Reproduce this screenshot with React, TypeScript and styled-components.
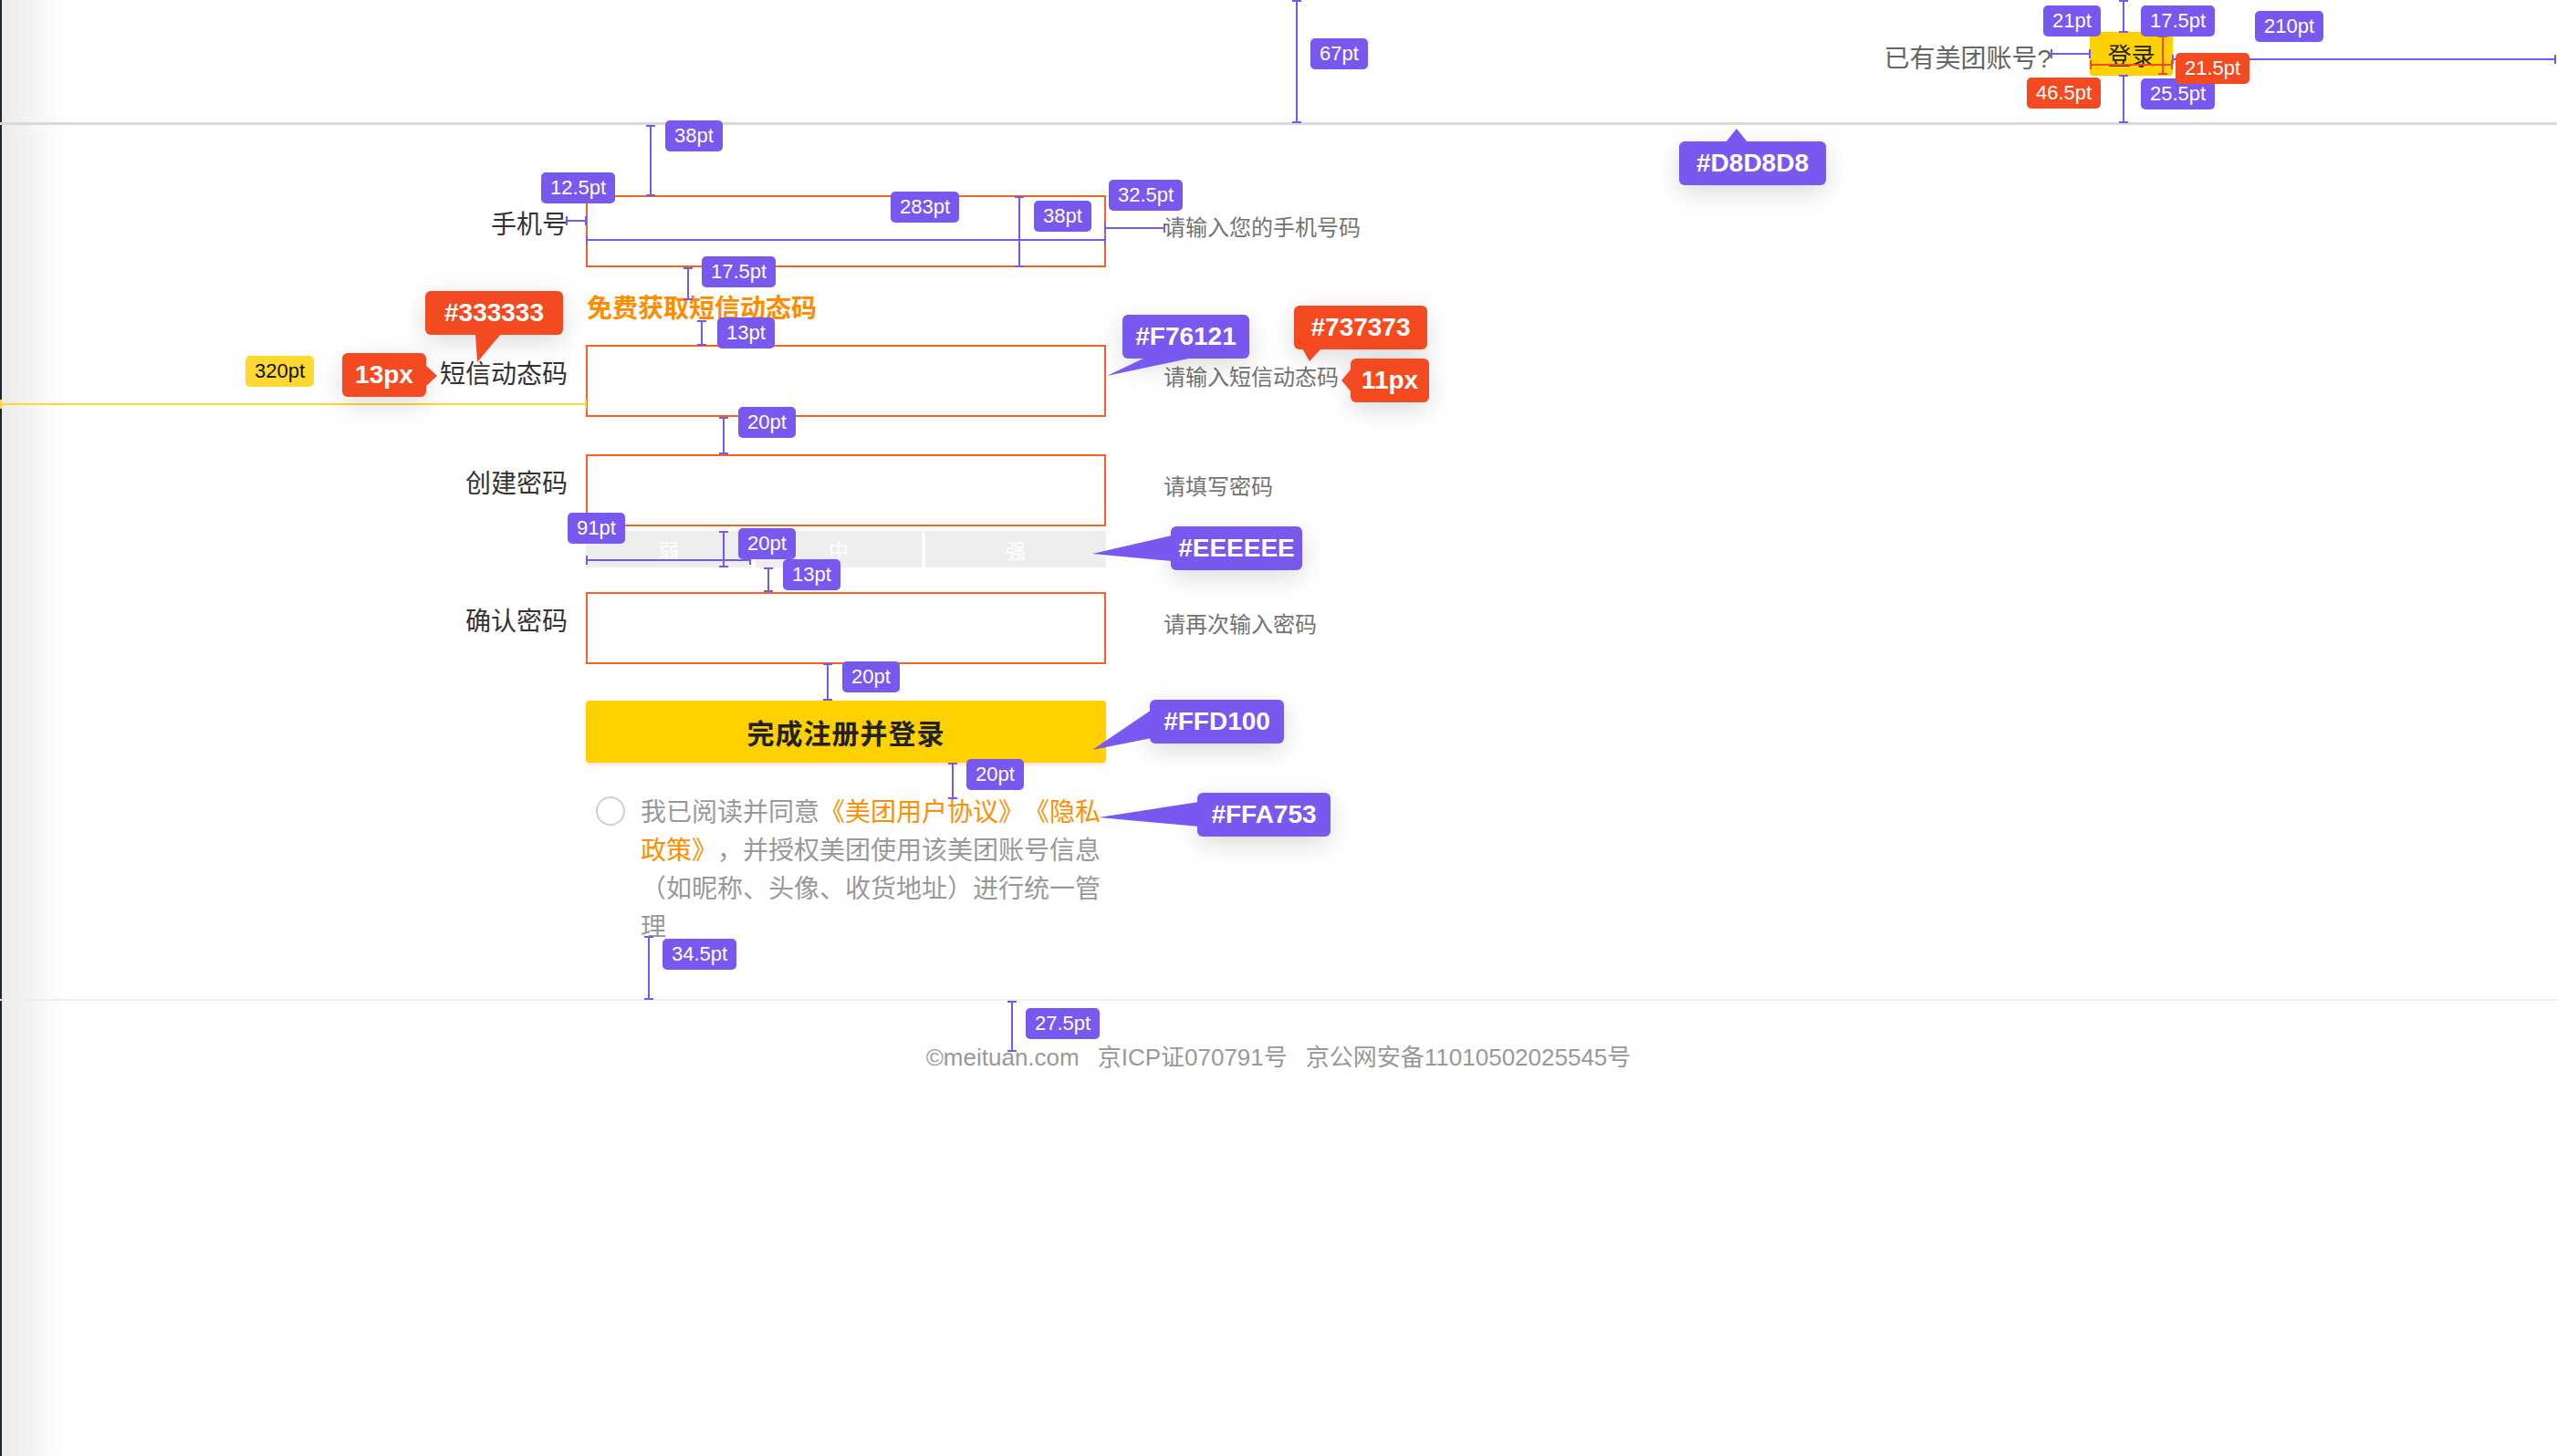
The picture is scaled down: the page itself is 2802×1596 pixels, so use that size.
import styled, { createGlobalStyle } from "styled-components";

const PURPLE = "#7858EE";
const RED = "#F34A22";
const YELLOW = "#FFD92F";

type Tone = "purple" | "red" | "yellow";
const toneBg = (t: Tone) => (t === "red" ? RED : t === "yellow" ? YELLOW : PURPLE);

const GlobalStyle = createGlobalStyle`
  * { box-sizing: border-box; }
  html, body { margin: 0; padding: 0; background: #fff; }
  body { font-family: "Liberation Sans", "Noto Sans CJK SC", sans-serif; }
`;

const Page = styled.div`
  position: relative;
  width: 2802px;
  height: 1596px;
  overflow: hidden;
  display: flex;
  flex-direction: column;
  background: linear-gradient(to right, #1c2630 0, #1c2630 2px, #ebebeb 2px, #fff 72px);
`;

const Header = styled.header`
  height: 137px;
  border-bottom: 3px solid #d8d8d8;
  display: flex;
  justify-content: flex-end;
  align-items: flex-start;
  padding: 35px 421px 0 0;
`;

const HaveAccount = styled.span`
  margin: 16px 42px 0 0;
  font-size: 28px;
  line-height: 28px;
  color: #666;
`;

const LoginButton = styled.button`
  width: 91px;
  height: 48px;
  border: none;
  border-radius: 4px;
  background: #ffd100;
  color: #222;
  font-family: inherit;
  font-size: 26px;
  display: flex;
  align-items: center;
  justify-content: center;
  padding: 0;
`;

const Form = styled.div`
  display: flex;
  flex-direction: column;
  margin-top: 77px;
`;

const Row = styled.div<{ $mt?: number }>`
  display: flex;
  align-items: center;
  height: 79px;
  margin-top: ${(p) => p.$mt ?? 0}px;
`;

const Label = styled.label`
  width: 622px;
  margin: 0 20px 14px 0;
  text-align: right;
  font-size: 28px;
  line-height: 28px;
  color: #333;
`;

const Field = styled.input`
  width: 570px;
  height: 79px;
  border: 2px solid #f76121;
  background: #fff;
  outline: none;
  margin: 0;
`;

const Hint = styled.span`
  margin: 0 0 8px 63px;
  font-size: 24px;
  line-height: 24px;
  color: #737373;
`;

const SmsLink = styled.a`
  margin: 32px 0 25px 643px;
  font-size: 28px;
  line-height: 28px;
  font-weight: 700;
  color: #ff8c00;
`;

const Strength = styled.div`
  margin: 5px 0 0 642px;
  width: 570px;
  height: 40px;
  display: grid;
  grid-template-columns: 182px 182px 1fr;
  gap: 4px;
`;

const Level = styled.div`
  background: #eeeeee;
  color: #fff;
  font-size: 22px;
  display: flex;
  align-items: center;
  justify-content: center;
`;

const Submit = styled.button`
  margin: 40px 0 0 642px;
  width: 570px;
  height: 68px;
  border: none;
  border-radius: 4px;
  background: #ffd100;
  box-shadow: 0 3px 5px rgba(255, 150, 110, 0.25);
  color: #222;
  font-family: inherit;
  font-size: 30px;
  font-weight: 700;
  letter-spacing: 1px;
`;

const Agreement = styled.div`
  margin: 34px 0 0 653px;
  display: flex;
  align-items: flex-start;
`;

const Radio = styled.span`
  width: 32px;
  height: 32px;
  margin-top: 3px;
  border: 2px solid #cfcfcf;
  border-radius: 50%;
  flex-shrink: 0;
`;

const AgreeText = styled.p`
  margin: 0 0 0 17px;
  width: 512px;
  font-size: 28px;
  line-height: 42px;
  color: #999;
  text-spacing-trim: space-all;
`;

const Orange = styled.span`
  color: #ff8f00;
`;

const Footer = styled.footer`
  margin-top: 57px;
  border-top: 2px solid #eeeeee;
  padding-top: 47px;
  display: flex;
  justify-content: center;
  gap: 20px;
  font-size: 26px;
  line-height: 30px;
  color: #999;
`;

const Overlay = styled.svg`
  position: absolute;
  left: 0;
  top: 0;
  pointer-events: none;
`;

const DimTag = styled.div<{ $x: number; $y: number; $tone: Tone }>`
  position: absolute;
  left: ${(p) => p.$x}px;
  top: ${(p) => p.$y}px;
  height: 34px;
  padding: 0 10px;
  border-radius: 5px;
  background: ${(p) => toneBg(p.$tone)};
  color: ${(p) => (p.$tone === "yellow" ? "#111" : "#fff")};
  font-family: "Liberation Sans", sans-serif;
  font-size: 22px;
  line-height: 34px;
  white-space: nowrap;
`;

const ColorTag = styled.div<{ $x: number; $y: number; $w: number; $tone: Tone }>`
  position: absolute;
  left: ${(p) => p.$x}px;
  top: ${(p) => p.$y}px;
  width: ${(p) => p.$w}px;
  height: 48px;
  border-radius: 6px;
  background: ${(p) => toneBg(p.$tone)};
  color: #fff;
  box-shadow: 0 8px 28px rgba(0, 0, 0, 0.14);
  font-family: "Liberation Sans", sans-serif;
  font-weight: 700;
  font-size: 28px;
  line-height: 48px;
  text-align: center;
  white-space: nowrap;
`;

const vLines: [number, number, number][] = [
  [1421, 1, 134], [2327, 1, 35], [2327, 83, 134], [713, 138, 214], [1117, 216, 292],
  [754, 294, 328], [769, 352, 378], [793, 458, 497], [793, 583, 621], [842, 623, 648],
  [907, 728, 767], [1044, 837, 875], [711, 1027, 1095], [1109, 1098, 1152],
];
const hLines: [number, number, number][] = [
  [59, 2248, 2290], [65, 2381, 2800], [242, 621, 642], [263, 643, 1211], [250, 1211, 1276], [614, 643, 822],
];

const dimTags: { x: number; y: number; t: string; tone?: Tone }[] = [
  { x: 1436, y: 42, t: "67pt" },
  { x: 2239, y: 6, t: "21pt" },
  { x: 2346, y: 6, t: "17.5pt" },
  { x: 2471, y: 12, t: "210pt" },
  { x: 2221, y: 85, t: "46.5pt", tone: "red" },
  { x: 2346, y: 86, t: "25.5pt" },
  { x: 2384, y: 58, t: "21.5pt", tone: "red" },
  { x: 729, y: 132, t: "38pt" },
  { x: 593, y: 189, t: "12.5pt" },
  { x: 976, y: 210, t: "283pt" },
  { x: 1133, y: 220, t: "38pt" },
  { x: 1215, y: 197, t: "32.5pt" },
  { x: 769, y: 281, t: "17.5pt" },
  { x: 786, y: 348, t: "13pt" },
  { x: 269, y: 390, t: "320pt", tone: "yellow" },
  { x: 809, y: 446, t: "20pt" },
  { x: 622, y: 562, t: "91pt" },
  { x: 809, y: 579, t: "20pt" },
  { x: 858, y: 613, t: "13pt" },
  { x: 923, y: 725, t: "20pt" },
  { x: 1059, y: 832, t: "20pt" },
  { x: 726, y: 1029, t: "34.5pt" },
  { x: 1124, y: 1105, t: "27.5pt" },
];

const colorTags: { x: number; y: number; w: number; t: string; tone: Tone; ptr: string }[] = [
  { x: 1840, y: 155, w: 161, t: "#D8D8D8", tone: "purple", ptr: "1891,156 1903,141 1915,156" },
  { x: 466, y: 319, w: 151, t: "#333333", tone: "red", ptr: "521,366 549,366 523,397" },
  { x: 375, y: 387, w: 92, t: "13px", tone: "red", ptr: "466,400 479,412 466,424" },
  { x: 1230, y: 345, w: 139, t: "#F76121", tone: "purple", ptr: "1257,391 1312,391 1213,412" },
  { x: 1418, y: 335, w: 146, t: "#737373", tone: "red", ptr: "1427,382 1448,382 1435,396" },
  { x: 1480, y: 393, w: 86, t: "11px", tone: "red", ptr: "1481,404 1470,417 1481,430" },
  { x: 1283, y: 577, w: 144, t: "#EEEEEE", tone: "purple", ptr: "1284,587 1284,615 1197,607" },
  { x: 1260, y: 767, w: 147, t: "#FFD100", tone: "purple", ptr: "1262,778 1262,809 1197,822" },
  { x: 1312, y: 869, w: 146, t: "#FFA753", tone: "purple", ptr: "1314,879 1314,906 1204,896" },
];

const VMeasure = ({ x, y1, y2, c }: { x: number; y1: number; y2: number; c: string }) => (
  <g stroke={c} strokeWidth={2}>
    <line x1={x} y1={y1} x2={x} y2={y2} />
    <line x1={x - 5} y1={y1} x2={x + 5} y2={y1} />
    <line x1={x - 5} y1={y2} x2={x + 5} y2={y2} />
  </g>
);

const HMeasure = ({ y, x1, x2, c }: { y: number; x1: number; x2: number; c: string }) => (
  <g stroke={c} strokeWidth={2}>
    <line x1={x1} y1={y} x2={x2} y2={y} />
    <line x1={x1} y1={y - 5} x2={x1} y2={y + 5} />
    <line x1={x2} y1={y - 5} x2={x2} y2={y + 5} />
  </g>
);

const App = () => {
  return (
    <>
      <GlobalStyle />
      <Page>
        <Header>
          <HaveAccount>已有美团账号?</HaveAccount>
          <LoginButton>登录</LoginButton>
        </Header>

        <Form>
          <Row>
            <Label>手机号</Label>
            <Field />
            <Hint>请输入您的手机号码</Hint>
          </Row>
          <SmsLink>免费获取短信动态码</SmsLink>
          <Row>
            <Label>短信动态码</Label>
            <Field />
            <Hint>请输入短信动态码</Hint>
          </Row>
          <Row $mt={41}>
            <Label>创建密码</Label>
            <Field type="password" />
            <Hint>请填写密码</Hint>
          </Row>
          <Strength>
            <Level>弱</Level>
            <Level>中</Level>
            <Level>强</Level>
          </Strength>
          <Row $mt={27}>
            <Label>确认密码</Label>
            <Field type="password" />
            <Hint>请再次输入密码</Hint>
          </Row>
          <Submit>完成注册并登录</Submit>
          <Agreement>
            <Radio />
            <AgreeText>
              我已阅读并同意<Orange>《美团用户协议》《隐私政策》</Orange>，并授权美团使用该美团账号信息（如昵称、头像、收货地址）进行统一管理
            </AgreeText>
          </Agreement>
        </Form>

        <Footer>
          <span>©meituan.com</span>
          <span>京ICP证070791号</span>
          <span>京公网安备11010502025545号</span>
        </Footer>

        <Overlay width={2802} height={1596}>
          {vLines.map(([x, y1, y2], i) => (
            <VMeasure key={"v" + i} x={x} y1={y1} y2={y2} c={PURPLE} />
          ))}
          {hLines.map(([y, x1, x2], i) => (
            <HMeasure key={"h" + i} y={y} x1={x1} x2={x2} c={PURPLE} />
          ))}
          <HMeasure y={71} x1={2291} x2={2380} c={RED} />
          <VMeasure x={2370} y1={40} y2={81} c={RED} />
          <HMeasure y={443} x1={1} x2={642} c={YELLOW} />
        </Overlay>

        {dimTags.map((d, i) => (
          <DimTag key={"d" + i} $x={d.x} $y={d.y} $tone={d.tone ?? "purple"}>
            {d.t}
          </DimTag>
        ))}
        {colorTags.map((c, i) => (
          <ColorTag key={"c" + i} $x={c.x} $y={c.y} $w={c.w} $tone={c.tone}>
            {c.t}
          </ColorTag>
        ))}
        <Overlay width={2802} height={1596}>
          {colorTags.map((c, i) => (
            <polygon key={"p" + i} points={c.ptr} fill={toneBg(c.tone)} />
          ))}
        </Overlay>
      </Page>
    </>
  );
};

export default App;
